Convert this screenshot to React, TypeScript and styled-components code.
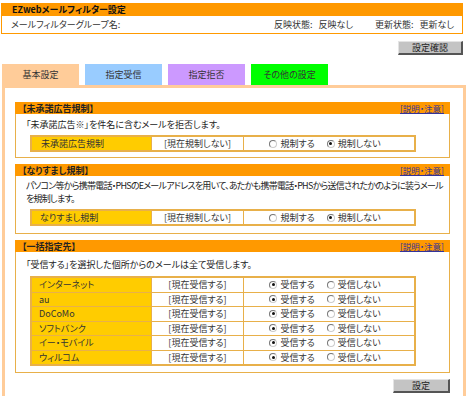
import React from "react";
import styled, { createGlobalStyle } from "styled-components";

const Global = createGlobalStyle`
  html, body { margin: 0; padding: 0; background: #fff; }
  body {
    font-family: "Noto Sans CJK JP", "Noto Sans", sans-serif;
    font-size: 9px;
    color: #333;
    font-feature-settings: "palt" 1;
  }
`;

const Page = styled.div`
  width: 470px;
  height: 396px;
  overflow: hidden;
  padding: 3px 0 0 1px;
  box-sizing: border-box;
`;

const HeaderBox = styled.div`
  width: 462px;
  border: 1px solid #ff9900;
  box-sizing: border-box;
`;

const TitleBar = styled.div`
  background: #ff9900;
  height: 12px;
  line-height: 12px;
  padding-left: 10px;
  font-weight: bold;
  font-size: 9px;
  color: #111;
`;

const InfoRow = styled.div`
  display: flex;
  align-items: center;
  height: 17px;
  padding: 0 8px 0 9px;
  font-size: 9px;
  color: #333;
`;

const GroupLabel = styled.span`
  flex: 1;
`;

const Status = styled.span<{ $gap: number }>`
  margin-left: ${(p) => p.$gap}px;
  word-spacing: 4px;
`;

const ButtonRow = styled.div<{ $top: number; $w: number }>`
  display: flex;
  justify-content: flex-end;
  width: ${(p) => p.$w}px;
  margin-top: ${(p) => p.$top}px;
`;

const GrayButton = styled.div<{ $w: number }>`
  width: ${(p) => p.$w}px;
  height: 11px;
  line-height: 11px;
  background: #c4c4c4;
  border-right: 2px solid #555;
  border-bottom: 2px solid #555;
  border-top: 1px solid #e4e4e4;
  border-left: 1px solid #e4e4e4;
  text-align: center;
  font-size: 9px;
  color: #222;
`;

const Tabs = styled.div`
  display: flex;
  gap: 6px;
  margin-top: 9px;
  padding-left: 1px;
`;

const Tab = styled.div<{ $bg: string }>`
  width: 77px;
  height: 21px;
  line-height: 21px;
  background: ${(p) => p.$bg};
  text-align: center;
  font-size: 9px;
  color: #333;
`;

const Panel = styled.div`
  width: 464px;
  margin-left: 1px;
  border: 3px solid #ffcc99;
  border-bottom: none;
  box-sizing: border-box;
  padding: 14px 0 0 10px;
  height: 320px;
`;

const Section = styled.div<{ $mb: number }>`
  width: 435px;
  border: 1px solid #e8b04a;
  box-sizing: border-box;
  margin-bottom: ${(p) => p.$mb}px;
`;

const SectionHead = styled.div`
  display: flex;
  justify-content: space-between;
  align-items: center;
  height: 12px;
  margin: -1px -1px 0 -1px;
  background: #ff9900;
  padding: 0 6px 0 7px;
  font-weight: bold;
  font-size: 9px;
  color: #222;
`;

const HelpLink = styled.a`
  font-size: 8.5px;
  font-weight: normal;
  color: #33339a;
  text-decoration: underline;
`;

const Desc = styled.div<{ $pt: number; $ls?: number }>`
  padding: ${(p) => p.$pt}px 10px 0 10px;
  line-height: 13px;
  font-size: 9px;
  letter-spacing: ${(p) => p.$ls ?? 0}px;
  color: #222;
`;

const Line = styled.div`
  white-space: nowrap;
`;

const Table = styled.div<{ $mt: number; $mb: number }>`
  width: 386px;
  margin: ${(p) => p.$mt}px 0 ${(p) => p.$mb}px 14px;
  border: 2px solid #e8b04a;
  box-sizing: border-box;
`;

const Row = styled.div<{ $h: number }>`
  display: grid;
  grid-template-columns: 120px 92px 1fr;
  height: ${(p) => p.$h}px;
  & + & { border-top: 1px solid #e8b04a; }
`;

const NameCell = styled.div<{ $pad: number }>`
  background: #ffcc00;
  display: flex;
  align-items: center;
  padding-left: ${(p) => p.$pad}px;
  font-size: 9px;
  color: #333;
  border-right: 1px solid #e8b04a;
`;

const StateCell = styled.div`
  display: flex;
  align-items: center;
  justify-content: center;
  font-size: 9px;
  color: #333;
  border-right: 1px solid #e8b04a;
`;

const RadioCell = styled.div`
  display: flex;
  align-items: center;
  justify-content: center;
  gap: 12px;
  padding-right: 8px;
  font-size: 9px;
  color: #333;
`;

const RadioLabel = styled.span`
  display: inline-flex;
  align-items: center;
  gap: 3px;
`;

const Circle = styled.span<{ $on: boolean }>`
  width: 6px;
  height: 6px;
  border-radius: 50%;
  border: 1px solid #777;
  border-right-color: #ccc;
  border-bottom-color: #ccc;
  background: #fff;
  position: relative;
  &::after {
    content: "";
    display: ${(p) => (p.$on ? "block" : "none")};
    position: absolute;
    left: 1.5px;
    top: 1.5px;
    width: 3px;
    height: 3px;
    border-radius: 50%;
    background: #111;
  }
`;

const Radio = ({ on, label }: { on: boolean; label: string }) => (
  <RadioLabel>
    <Circle $on={on} />
    {label}
  </RadioLabel>
);

const carriers = ["インターネット", "au", "DoCoMo", "ソフトバンク", "イー・モバイル", "ウィルコム"];

export default function App() {
  return (
    <Page>
      <Global />
      <HeaderBox>
        <TitleBar>EZwebメールフィルター設定</TitleBar>
        <InfoRow>
          <GroupLabel>メールフィルターグループ名:</GroupLabel>
          <Status $gap={0}>反映状態: 反映なし</Status>
          <Status $gap={22}>更新状態: 更新なし</Status>
        </InfoRow>
      </HeaderBox>
      <ButtonRow $top={7} $w={462}>
        <GrayButton $w={62}>設定確認</GrayButton>
      </ButtonRow>
      <Tabs>
        <Tab $bg="#ffcc99">基本設定</Tab>
        <Tab $bg="#99ccff">指定受信</Tab>
        <Tab $bg="#cc99ff">指定拒否</Tab>
        <Tab $bg="#00ff00">その他の設定</Tab>
      </Tabs>
      <Panel>
        <Section $mb={6}>
          <SectionHead>
            <span>【未承諾広告規制】</span>
            <HelpLink>[説明・注意]</HelpLink>
          </SectionHead>
          <Desc $pt={4}>「未承諾広告※」を件名に含むメールを拒否します。</Desc>
          <Table $mt={4} $mb={5}>
            <Row $h={13}>
              <NameCell $pad={9}>未承諾広告規制</NameCell>
              <StateCell>[現在規制しない]</StateCell>
              <RadioCell>
                <Radio on={false} label="規制する" />
                <Radio on label="規制しない" />
              </RadioCell>
            </Row>
          </Table>
        </Section>
        <Section $mb={6}>
          <SectionHead>
            <span>【なりすまし規制】</span>
            <HelpLink>[説明・注意]</HelpLink>
          </SectionHead>
          <Desc $pt={3} $ls={-0.75}>
            <Line>パソコン等から携帯電話・PHSのEメールアドレスを用いて、あたかも携帯電話・PHSから送信されたかのように装うメール</Line>
            <Line>を規制します。</Line>
          </Desc>
          <Table $mt={4} $mb={7}>
            <Row $h={13}>
              <NameCell $pad={8}>なりすまし規制</NameCell>
              <StateCell>[現在規制しない]</StateCell>
              <RadioCell>
                <Radio on={false} label="規制する" />
                <Radio on label="規制しない" />
              </RadioCell>
            </Row>
          </Table>
        </Section>
        <Section $mb={0}>
          <SectionHead>
            <span>【一括指定先】</span>
            <HelpLink>[説明・注意]</HelpLink>
          </SectionHead>
          <Desc $pt={6}>「受信する」を選択した個所からのメールは全て受信します。</Desc>
          <Table $mt={5} $mb={6}>
            {carriers.map((c) => (
              <Row $h={13.5} key={c}>
                <NameCell $pad={7}>{c}</NameCell>
                <StateCell>[現在受信する]</StateCell>
                <RadioCell>
                  <Radio on label="受信する" />
                  <Radio on={false} label="受信しない" />
                </RadioCell>
              </Row>
            ))}
          </Table>
        </Section>
        <ButtonRow $top={6} $w={435}>
          <GrayButton $w={54}>設定</GrayButton>
        </ButtonRow>
      </Panel>
    </Page>
  );
}
